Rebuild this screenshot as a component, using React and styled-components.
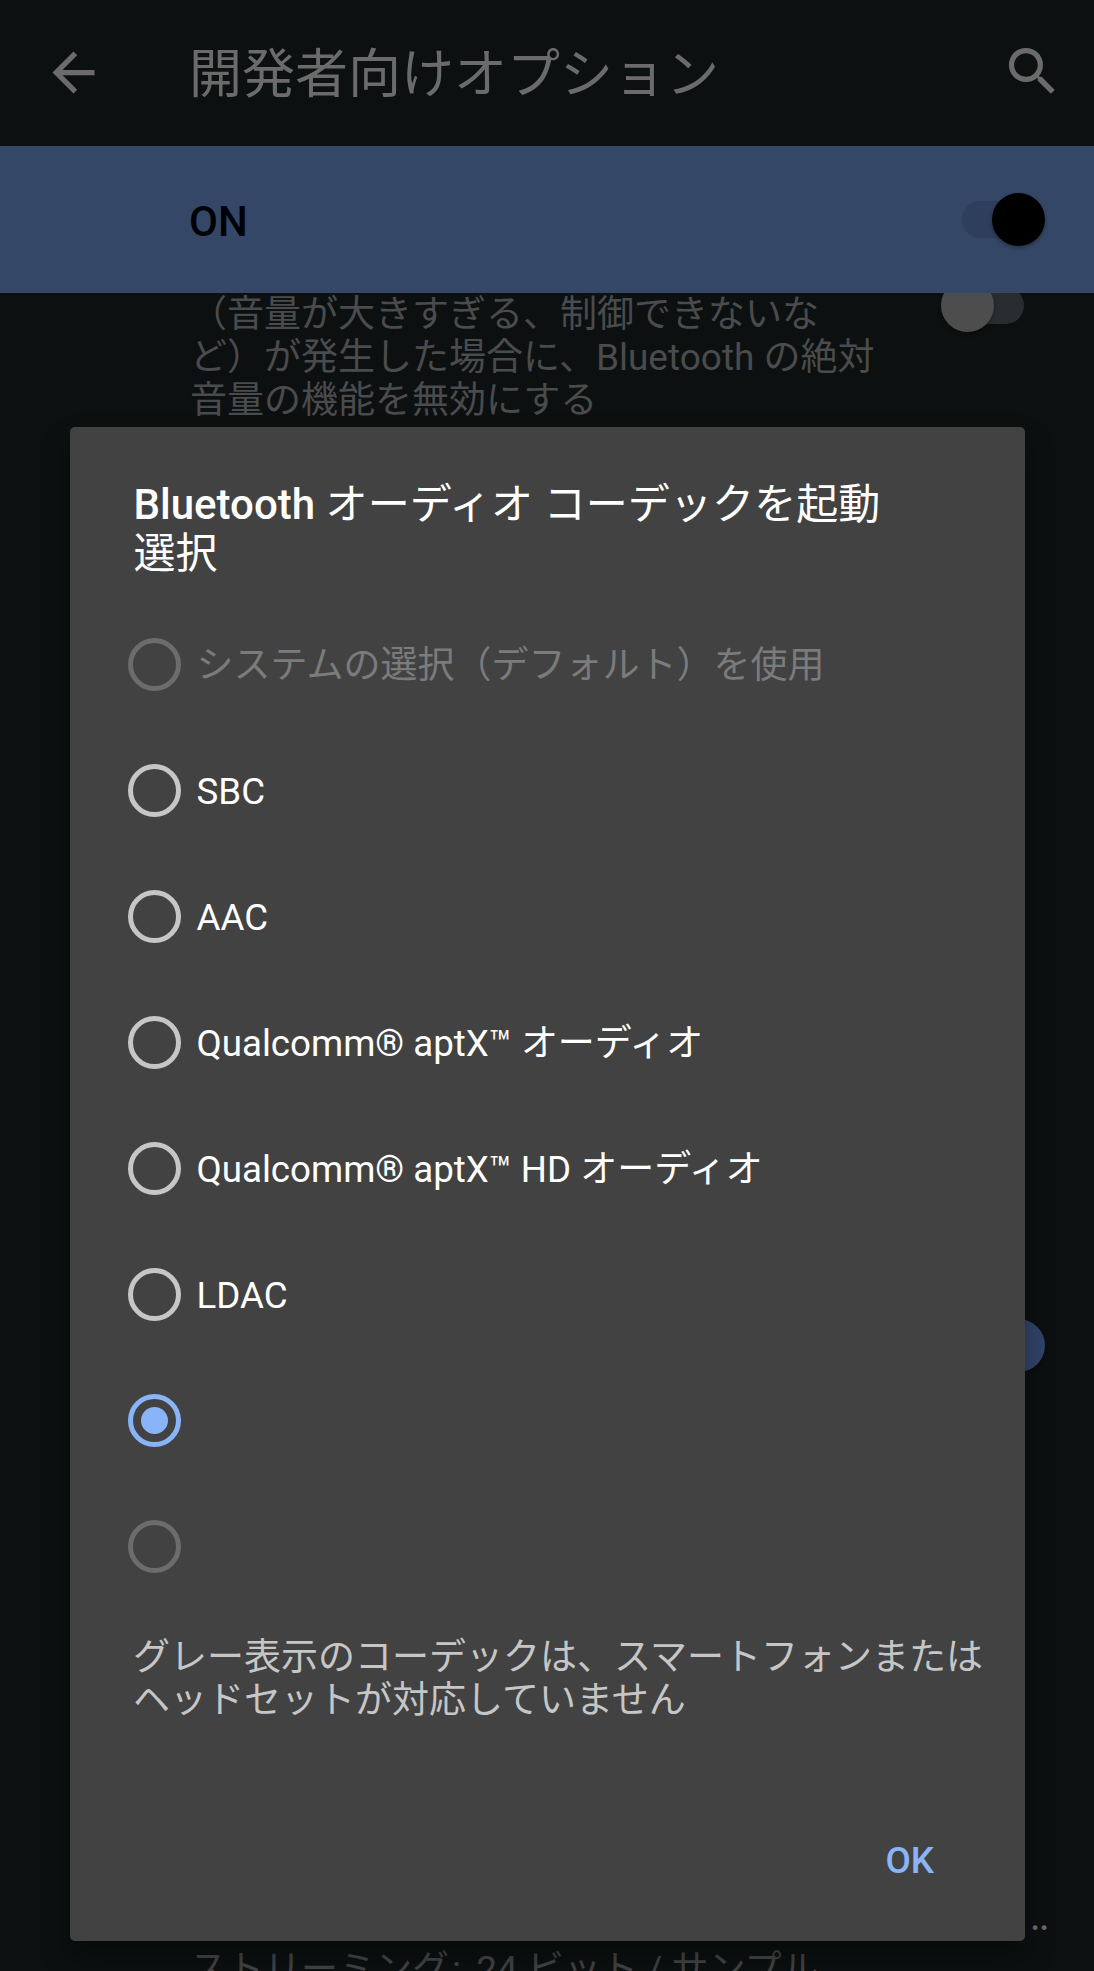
import React, { useState } from 'react'
import styled, { createGlobalStyle } from 'styled-components'
import { MdArrowBack, MdSearch } from 'react-icons/md'

const codecs = [
  { id: 'default', label: 'システムの選択（デフォルト）を使用', disabled: true },
  { id: 'sbc', name: 'SBC' },
  { id: 'aac', name: 'AAC' },
  { id: 'aptx', name: 'Qualcomm® aptX™ ', label: 'オーディオ' },
  { id: 'aptxhd', name: 'Qualcomm® aptX™ HD ', label: 'オーディオ' },
  { id: 'ldac', name: 'LDAC' },
  { id: 'unnamed' },
  { id: 'unnamed2', disabled: true },
]

function Switch({ on, variant }) {
  return (
    <SwitchBox>
      <Track $variant={variant} />
      <Thumb $variant={variant} $on={on} />
    </SwitchBox>
  )
}

export default function App() {
  const [selected, setSelected] = useState('unnamed')

  return (
    <>
      <GlobalStyle />
      <Screen>
        <AppBar>
          <MdArrowBack size={63} />
          <PageTitle>開発者向けオプション</PageTitle>
          <MdSearch size={63} />
        </AppBar>
        <MainSwitch>
          <Strong>ON</Strong>
          <Switch on variant="main" />
        </MainSwitch>

        <Settings>
          <Setting>
            <Summary>
              （音量が大きすぎる、制御できないな<br />
              ど）が発生した場合に、Bluetooth の絶対<br />
              音量の機能を無効にする
            </Summary>
            <Switch variant="off" />
          </Setting>
          <SwitchSetting>
            <Switch on variant="on" />
          </SwitchSetting>
          <CodecSetting>
            <Ellipsis>..</Ellipsis>
            <Summary $dim>ストリーミング<Colon>:</Colon> 24 ビット / サンプル</Summary>
          </CodecSetting>
        </Settings>

        <Dialog role="dialog">
          <DialogTitle>
            <Strong>Bluetooth</Strong> オーディオ コーデックを起動<br />選択
          </DialogTitle>
          <Options>
            {codecs.map((c) => (
              <Option key={c.id} $disabled={c.disabled} onClick={() => !c.disabled && setSelected(c.id)}>
                <Radio $checked={selected === c.id} $disabled={c.disabled} />
                <Label>
                  <Latin>{c.name}</Latin>
                  {c.label}
                </Label>
              </Option>
            ))}
          </Options>
          <Note>
            グレー表示のコーデックは、スマートフォンまたは<br />
            ヘッドセットが対応していません
          </Note>
          <Actions>
            <OkButton>OK</OkButton>
          </Actions>
        </Dialog>
      </Screen>
    </>
  )
}

const GlobalStyle = createGlobalStyle`
* {
  box-sizing: border-box;
}
body {
  margin: 0;
  background: #0c1011;
  font-family: Roboto, "Noto Sans CJK JP", sans-serif;
  text-spacing-trim: space-all;
}
`

const Screen = styled.div`
position: relative;
display: flex;
flex-direction: column;
width: 1094px;
height: 1971px;
overflow: hidden;
background: #0c1011;
`

const AppBar = styled.header`
display: flex;
align-items: center;
flex: none;
height: 146px;
padding: 0 30px 1px 42px;
color: #6b6b6c;

svg:last-child {
  margin: 0 0 3px auto;
}
`

const PageTitle = styled.h1`
margin: 0 0 0 84px;
padding-top: 5px;
font-size: 53px;
line-height: 62px;
font-weight: 400;
white-space: nowrap;
`

const Strong = styled.span`
font-weight: 500;
letter-spacing: 0;
`

const MainSwitch = styled.div`
display: flex;
align-items: center;
justify-content: space-between;
flex: none;
height: 147px;
padding: 0 49px 0 189px;
background: #354766;
color: #000206;
font-size: 42px;
line-height: 49px;

${Strong} {
  padding-top: 4px;
}
`

const SwitchBox = styled.div`
display: grid;
align-items: center;
flex: none;
width: 104px;
height: 53px;

> * {
  grid-area: 1 / 1;
}
`

const trackColors = { main: '#2e3f5b', off: '#2a2d2f', on: '#1b2536' }
const thumbColors = { main: '#000', off: '#4d4d4d', on: '#324369' }

const Track = styled.div`
justify-self: center;
width: 62px;
height: 37px;
border-radius: 19px;
background: ${({ $variant }) => trackColors[$variant]};
`

const Thumb = styled.div`
justify-self: ${({ $on }) => ($on ? 'end' : 'start')};
width: 53px;
height: 53px;
border-radius: 50%;
background: ${({ $variant }) => thumbColors[$variant]};
box-shadow: 0 2px 4px rgba(0, 0, 0, 0.3);
`

const Settings = styled.main`
display: grid;
grid-template-rows: 989px 126px 483px 80px;
flex: 1;
min-height: 0;
overflow: hidden;
`

const Setting = styled.section`
display: flex;
align-items: flex-start;
justify-content: space-between;
padding: 0 49px 0 190px;

${SwitchBox} {
  margin-top: -14px;
}
`

const SwitchSetting = styled.section`
display: flex;
align-items: center;
justify-content: flex-end;
padding-right: 49px;
`

const CodecSetting = styled.section`
grid-row: 4;
padding-left: 190px;
`

const Summary = styled.p`
margin: 0;
font-size: 37px;
line-height: 43px;
color: ${({ $dim }) => ($dim ? '#434445' : '#4a4b4c')};
white-space: nowrap;
`

const Colon = styled.span`
margin: 0 6px 0 3px;
`

const Ellipsis = styled.p`
margin: 0 46px 8px 0;
font-size: 42px;
line-height: 49px;
letter-spacing: -1.9px;
text-align: right;
color: #6b6b6c;
`

const Dialog = styled.div`
position: absolute;
top: 427px;
left: 70px;
display: flex;
flex-direction: column;
width: 955px;
height: 1514px;
padding-top: 53px;
border-radius: 5px;
background: #424242;
color: #fff;
box-shadow: 0 16px 28px rgba(0, 0, 0, 0.35);
`

const DialogTitle = styled.h2`
margin: 0 0 23px;
padding-left: 63.5px;
font-size: 42px;
line-height: 49px;
font-weight: 400;
letter-spacing: 0.1px;
white-space: nowrap;
`

const Options = styled.ul`
margin: 0;
padding: 0 0 0 57.5px;
list-style: none;
`

const Option = styled.li`
display: flex;
align-items: center;
gap: 16px;
height: 126px;
color: ${({ $disabled }) => ($disabled ? '#7b7b7b' : '#fff')};
`

const Radio = styled.span`
display: flex;
align-items: center;
justify-content: center;
flex: none;
width: 53px;
height: 53px;
border: 5px solid ${({ $checked, $disabled }) => ($checked ? '#8ab4f8' : $disabled ? '#6c6c6c' : '#c6c6c6')};
border-radius: 50%;

&::after {
  content: '';
  width: 27px;
  height: 27px;
  border-radius: 50%;
  background: ${({ $checked }) => ($checked ? '#8ab4f8' : 'transparent')};
}
`

const Label = styled.span`
padding-top: 3px;
font-size: 37px;
line-height: 43px;
white-space: nowrap;
`

const Latin = styled.span`
font-size: 36.7px;
white-space: pre;
`

const Note = styled.p`
margin: 27px 0 0;
padding-left: 63px;
font-size: 37px;
line-height: 43px;
color: #c6c6c6;
white-space: nowrap;
`

const Actions = styled.div`
display: flex;
justify-content: flex-end;
margin-top: 117px;
padding-right: 91px;
`

const OkButton = styled.button`
padding: 0;
border: 0;
background: none;
color: #8ab4f8;
font-family: inherit;
font-size: 36.8px;
line-height: 43px;
font-weight: 500;
`
